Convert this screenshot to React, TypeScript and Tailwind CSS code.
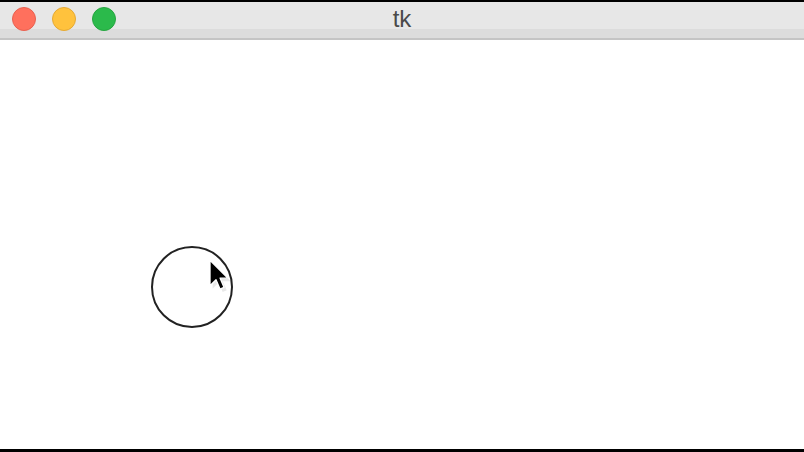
const TrafficLight = ({ color, border }: { color: string; border: string }) => (
    <div className={`w-[24px] h-[24px] rounded-full border ${color} ${border}`}></div>
)

const Cursor = () => (
    <svg width="24" height="38" viewBox="0 0 18 28" className="absolute left-[206px] top-[256px]">
        <path d="M4 4 L4 23 L8.5 18.5 L11.5 25.5 L14.5 24.2 L11.6 17.4 L17.5 17.4 Z" fill="#e2e2e2" transform="translate(1 1.2)" opacity="0.8" />
        <path d="M3 3 L3 22 L7.5 17.5 L10.5 24.5 L13.5 23.2 L10.6 16.4 L16.5 16.4 Z" fill="#000" stroke="#fff" strokeWidth="1" strokeLinejoin="round" />
    </svg>
)

export default function App() {
    return (
        <div className="w-[804px] h-[452px] bg-white flex flex-col overflow-hidden" style={{ fontFamily: '"Liberation Sans", Arial, sans-serif' }}>
            {/* Title bar */}
            <div className="h-[2px] bg-black"></div>
            <div className="relative h-[27px] bg-[#e7e7e7] flex items-center">
                <div className="absolute left-[12px] top-[5px] flex gap-[16px]">
                    <TrafficLight color="bg-[#ff705d]" border="border-[#e8604f]" />
                    <TrafficLight color="bg-[#ffc23d]" border="border-[#e5a933]" />
                    <TrafficLight color="bg-[#2bba4b]" border="border-[#25a540]" />
                </div>
                <div className="w-full text-center text-[24px] leading-none text-[#4a4a4a] pt-[6px]">tk</div>
            </div>
            <div className="h-[9px] bg-[#dcdcdc]"></div>
            <div className="h-[2px] bg-[#c4c4c4]"></div>

            {/* Canvas */}
            <div className="relative flex-1 bg-white">
                <svg width="804" height="409" className="absolute left-0 top-0">
                    <circle cx="192" cy="247" r="40" fill="none" stroke="#222" strokeWidth="2" />
                </svg>
            </div>
            <Cursor />
            <div className="h-[3px] bg-black"></div>
        </div>
    )
}
